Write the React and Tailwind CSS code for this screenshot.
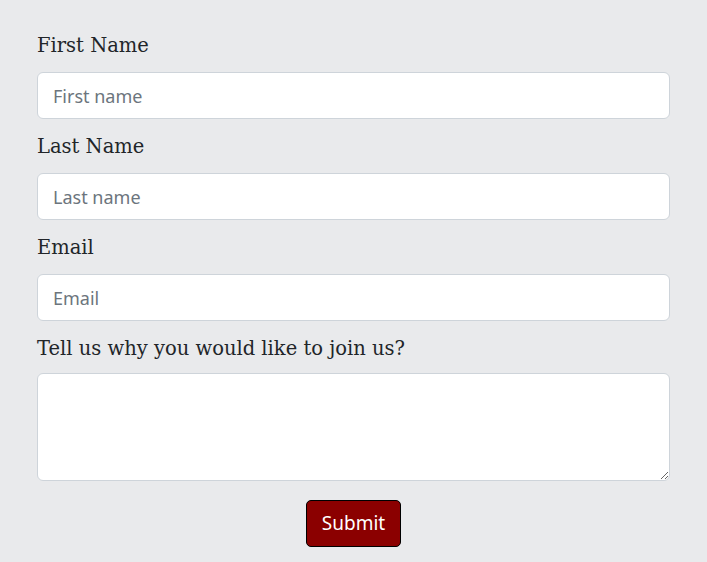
import React from "react";

const labelCls = "block font-['DejaVu_Serif',serif] text-[19.5px] leading-[33px] mb-[10px] text-[#212529]";
const inputCls = "block w-full h-[47px] rounded-[6px] border border-[#ced4da] bg-white px-[15px] font-['Noto_Sans',sans-serif] text-[18px] text-[#212529] placeholder:text-[#6c757d] outline-none";

export default function App() {
  return (
    <div className="min-h-screen w-full bg-[#e9eaec] px-[37px] pt-[29px]">
      <form className="flex flex-col" onSubmit={(e) => e.preventDefault()}>
        <div className="mb-[11px]">
          <label className={labelCls}>First Name</label>
          <input className={inputCls} placeholder="First name" />
        </div>
        <div className="mb-[11px]">
          <label className={labelCls}>Last Name</label>
          <input className={inputCls} placeholder="Last name" />
        </div>
        <div className="mb-[11px]">
          <label className={labelCls}>Email</label>
          <input className={inputCls} placeholder="Email" />
        </div>
        <div className="mb-[19px]">
          <label className="block font-['DejaVu_Serif',serif] text-[19.5px] leading-[33px] mb-2 text-[#212529]">Tell us why you would like to join us?</label>
          <textarea className="block w-full h-[108px] rounded-[6px] border border-[#ced4da] bg-white px-[15px] py-2 font-['Noto_Sans',sans-serif] text-[18px] outline-none resize-y" />
        </div>
        <div className="flex justify-center">
          <button type="submit" className="h-[47px] w-[95px] rounded-[5px] border border-black bg-[#8b0000] font-['Noto_Sans',sans-serif] text-[19px] text-white">Submit</button>
        </div>
      </form>
    </div>
  );
}
